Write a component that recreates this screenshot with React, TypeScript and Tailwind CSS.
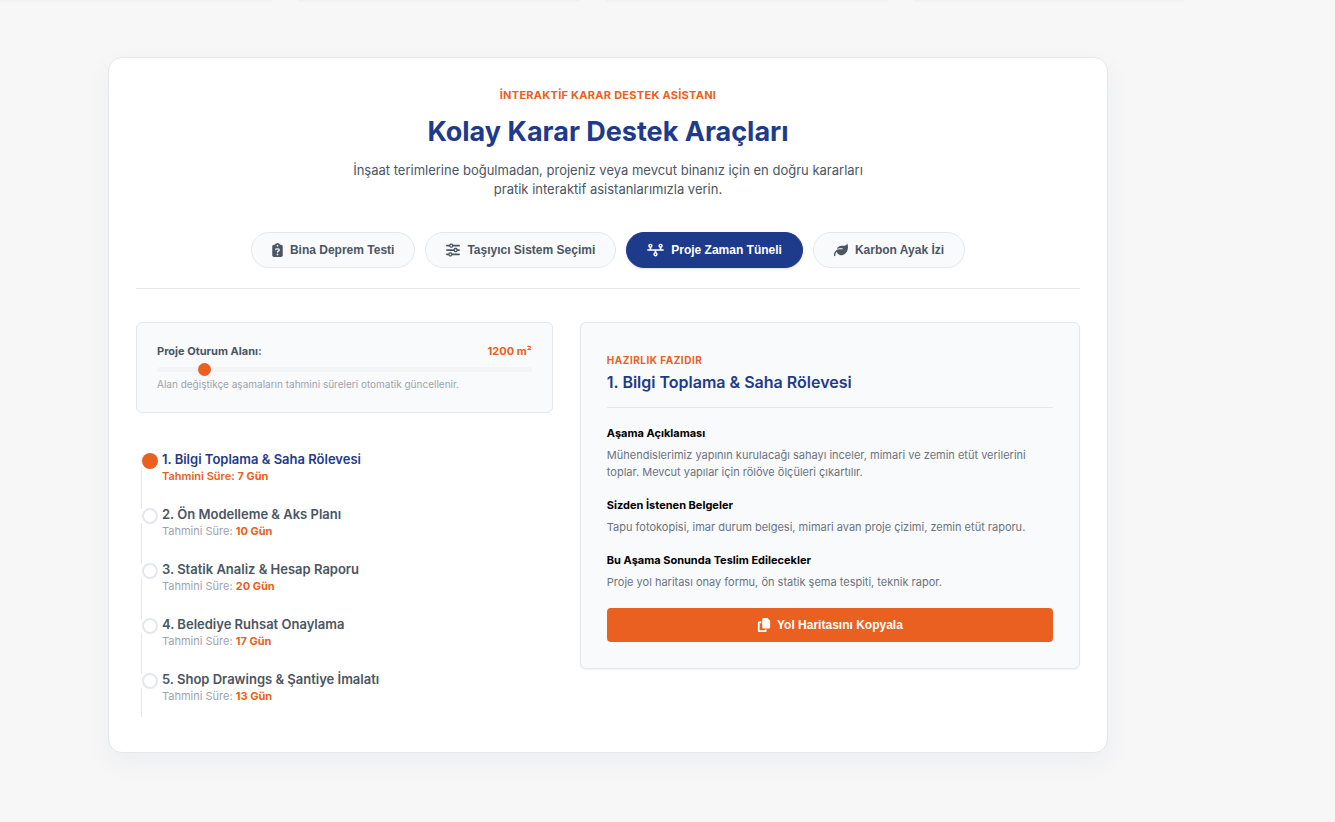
import { useState } from 'react';
import {
  FaClipboardQuestion,
  FaCopy,
  FaLeaf,
  FaSliders,
  FaTimeline,
} from 'react-icons/fa6';

const tabs = [
  { id: 'deprem', label: 'Bina Deprem Testi', icon: FaClipboardQuestion, iconSize: 'h-[14px] w-[11px]' },
  { id: 'tasiyici', label: 'Taşıyıcı Sistem Seçimi', icon: FaSliders, iconSize: 'size-[14px]' },
  { id: 'zaman', label: 'Proje Zaman Tüneli', icon: FaTimeline, iconSize: 'h-[14px] w-[17px]' },
  { id: 'karbon', label: 'Karbon Ayak İzi', icon: FaLeaf, iconSize: 'size-[14px]' },
];

const stages = [
  { title: '1. Bilgi Toplama & Saha Rölevesi', days: 7 },
  { title: '2. Ön Modelleme & Aks Planı', days: 10 },
  { title: '3. Statik Analiz & Hesap Raporu', days: 20 },
  { title: '4. Belediye Ruhsat Onaylama', days: 17 },
  { title: '5. Shop Drawings & Şantiye İmalatı', days: 13 },
];

const details = [
  {
    title: 'Aşama Açıklaması',
    text: 'Mühendislerimiz yapının kurulacağı sahayı inceler, mimari ve zemin etüt verilerini toplar. Mevcut yapılar için rölöve ölçüleri çıkartılır.',
  },
  {
    title: 'Sizden İstenen Belgeler',
    text: 'Tapu fotokopisi, imar durum belgesi, mimari avan proje çizimi, zemin etüt raporu.',
  },
  {
    title: 'Bu Aşama Sonunda Teslim Edilecekler',
    text: 'Proje yol haritası onay formu, ön statik şema tespiti, teknik rapor.',
  },
];

function Tabs() {
  const [active, setActive] = useState('zaman');

  return (
    <div className="flex flex-wrap justify-center gap-[10px] border-b border-[#e5e7eb] pb-5">
      {tabs.map(({ id, label, icon: Icon, iconSize }) => (
        <button
          key={id}
          type="button"
          onClick={() => setActive(id)}
          className={
            id === active
              ? 'flex h-9 items-center gap-[7px] rounded-full border border-[#1e3a8a] bg-[#1e3a8a] px-5 font-["Liberation_Sans",Arial,sans-serif] text-xs font-bold text-white shadow-sm'
              : 'flex h-9 items-center gap-[7px] rounded-full border border-[#e5e7eb] bg-[#f9fafb] px-5 font-["Liberation_Sans",Arial,sans-serif] text-xs font-bold text-[#4b5563]'
          }
        >
          <Icon className={iconSize} />
          {label}
        </button>
      ))}
    </div>
  );
}

function AreaSlider() {
  const [area, setArea] = useState(1200);

  return (
    <div className="rounded-md border border-[#e5e7eb] bg-[#f9fafb] p-5">
      <div className="flex justify-between text-[11px] leading-4 font-bold">
        <label htmlFor="alan" className="text-[#4b5563]">
          Proje Oturum Alanı:
        </label>
        <span className="text-[#ea6020]">{area} m²</span>
      </div>
      <input
        id="alan"
        type="range"
        min={100}
        max={9800}
        step={100}
        value={area}
        onChange={(e) => setArea(Number(e.target.value))}
        className="mt-1 block h-[13px] w-full cursor-pointer appearance-none bg-transparent [&::-webkit-slider-runnable-track]:h-[5px] [&::-webkit-slider-runnable-track]:rounded-sm [&::-webkit-slider-runnable-track]:bg-[#f3f4f6] [&::-webkit-slider-thumb]:-mt-1 [&::-webkit-slider-thumb]:size-[13px] [&::-webkit-slider-thumb]:appearance-none [&::-webkit-slider-thumb]:rounded-full [&::-webkit-slider-thumb]:bg-[#ea6020]"
      />
      <p className="text-[10px] leading-4 text-[#9ca3af]">
        Alan değiştikçe aşamaların tahmini süreleri otomatik güncellenir.
      </p>
    </div>
  );
}

function StageList() {
  const [current, setCurrent] = useState(0);

  return (
    <ol className="mt-[41px] ml-[5px] border-l border-[#e5e7eb] pb-[13px]">
      {stages.map((stage, i) => (
        <li key={stage.title} className="pb-[25px] last:pb-0">
          <button
            type="button"
            onClick={() => setCurrent(i)}
            className="flex h-[30px] items-start gap-1 text-left"
          >
            <span
              className={
                i === current
                  ? '-mt-px size-4 rounded-full bg-[#ea6020] ring-3 ring-white'
                  : '-mt-px size-4 rounded-full border-2 border-[#e5e7eb] bg-white ring-3 ring-white'
              }
            />
            <span className="flex flex-col gap-[3px]">
              <span
                className={
                  i === current
                    ? 'text-[13px] leading-[11px] font-semibold text-[#1e3a8a]'
                    : 'text-[13px] leading-[11px] font-semibold text-[#4b5563]'
                }
              >
                {stage.title}
              </span>
              <span
                className={
                  i === current
                    ? 'text-[11px] leading-4 font-semibold text-[#ea6020]'
                    : 'text-[11px] leading-4 text-[#9ca3af]'
                }
              >
                Tahmini Süre: <strong className="font-bold text-[#ea6020]">{stage.days} Gün</strong>
              </span>
            </span>
          </button>
        </li>
      ))}
    </ol>
  );
}

function StageDetail() {
  return (
    <div className="rounded-md border border-[#e5e7eb] bg-[#f9fafb] p-[26px] shadow-xs">
      <div className="mb-[17px] border-b border-[#e5e7eb] pb-[14px]">
        <p className="text-[10px] leading-[22px] font-bold tracking-wider text-[#ea6020]">
          HAZIRLIK FAZIDIR
        </p>
        <h3 className="text-base leading-[22px] font-semibold text-[#1e3a8a]">
          1. Bilgi Toplama & Saha Rölevesi
        </h3>
      </div>
      <div className="flex flex-col gap-4">
        {details.map((item) => (
          <div key={item.title}>
            <h4 className="mb-[6px] text-[11px] leading-4 font-bold text-black">{item.title}</h4>
            <p className="text-[11px] leading-[17px] text-[#6b7280]">{item.text}</p>
          </div>
        ))}
      </div>
      <button
        type="button"
        className='mt-[17px] flex h-[34px] w-full items-center justify-center gap-[6px] rounded bg-[#ea6020] font-["Liberation_Sans",Arial,sans-serif] text-xs font-bold text-white'
      >
        <FaCopy className="size-[14px]" />
        Yol Haritasını Kopyala
      </button>
    </div>
  );
}

export default function App() {
  return (
    <main className="min-h-screen bg-[#f7f7f7] font-[Inter,sans-serif]">
      {/* bottom edge of the card row above */}
      <div className="grid max-w-[1184px] grid-cols-[272fr_282fr_282fr_270fr] gap-[26px]">
        <div className="h-0.5 rounded-br-lg bg-[#f1f1f2]" />
        <div className="h-0.5 rounded-b-lg bg-[#f1f1f2]" />
        <div className="h-0.5 rounded-b-lg bg-[#f1f1f2]" />
        <div className="h-0.5 rounded-bl-lg bg-[#f1f1f2]" />
      </div>

      <div className="max-w-[1216px] px-4 pt-[55px] pb-[69px]">
        <section className="mx-auto max-w-[1000px] rounded-[14px] border border-[#e5e7eb] bg-white px-[27px] pt-[27px] pb-[35px] shadow-[0_9px_26px_rgba(30,58,138,0.05)]">
          <header className="text-center">
            <p className="text-[11px] leading-5 font-bold tracking-wide text-[#ea6020]">
              İNTERAKTİF KARAR DESTEK ASİSTANI
            </p>
            <h2 className="mt-[11px] text-[27px] leading-8 font-bold text-[#1e3a8a]">
              Kolay Karar Destek Araçları
            </h2>
            <p className="mx-auto mt-[13px] mb-[33px] max-w-[520px] text-[13px] leading-[19px] text-[#4b5563]">
              İnşaat terimlerine boğulmadan, projeniz veya mevcut binanız için en doğru kararları
              pratik interaktif asistanlarımızla verin.
            </p>
          </header>

          <Tabs />

          <div className="mt-[33px] grid items-start gap-[27px] md:grid-cols-[5fr_6fr]">
            <div>
              <AreaSlider />
              <StageList />
            </div>
            <StageDetail />
          </div>
        </section>
      </div>
    </main>
  );
}
